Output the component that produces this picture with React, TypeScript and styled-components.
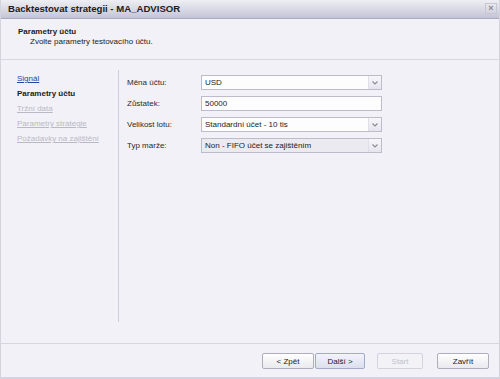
import React from "react";
import styled, { createGlobalStyle } from "styled-components";

const Global = createGlobalStyle`
  html, body { margin: 0; padding: 0; background: #f2f1f7; }
  body { font-family: "Liberation Sans", Arial, sans-serif; }
  * { box-sizing: border-box; }
`;

const Window = styled.div`
  width: 500px;
  height: 379px;
  display: flex;
  flex-direction: column;
  background: #f2f1f7;
  border-left: 1px solid #d4d3de;
  border-right: 1px solid #d4d3de;
  border-bottom: 2px solid #d4d3de;
  font-size: 8px;
  color: #1c1c1c;
`;

const TitleBar = styled.div`
  height: 19px;
  flex: none;
  display: flex;
  align-items: center;
  justify-content: space-between;
  padding: 0 2px 1px 7px;
  background: linear-gradient(#eeeef4, #d8d8e4 55%, #c4c4d6);
  border-bottom: 1px solid #a9a9c2;
`;

const Title = styled.span`
  font-size: 9.6px;
  font-weight: bold;
  color: #202020;
`;

const CloseBtn = styled.div`
  width: 12px;
  height: 11px;
  display: flex;
  align-items: center;
  justify-content: center;
  background: linear-gradient(#e8e8ee, #d2d2de);
  border: 1px solid #c6c6d4;
  color: #888892;
  font-size: 9px;
  font-weight: bold;
  line-height: 1;
`;

const Header = styled.div`
  height: 41px;
  flex: none;
  padding: 8px 0 0 17px;
  border-bottom: 1px solid #d8d7e2;
`;

const HeaderTitle = styled.div`
  font-weight: bold;
  line-height: 10px;
`;

const HeaderSub = styled.div`
  padding-left: 12px;
  line-height: 10px;
`;

const Body = styled.div`
  flex: 1;
  display: flex;
  padding: 10px 0 21px;
`;

const Nav = styled.div`
  width: 118px;
  flex: none;
  padding: 1px 0 0 16px;
  border-right: 1px solid #cfcedb;
  display: flex;
  flex-direction: column;
`;

const NavItem = styled.span<{ $state: "link" | "active" | "disabled" }>`
  line-height: 15px;
  white-space: nowrap;
  font-weight: ${(p) => (p.$state === "active" ? "bold" : "normal")};
  color: ${(p) =>
    p.$state === "link" ? "#2845a6" : p.$state === "disabled" ? "#b9b9c6" : "#1c1c1c"};
  text-decoration: ${(p) => (p.$state === "active" ? "none" : "underline")};
`;

const Form = styled.div`
  padding: 5px 0 0 8px;
  display: grid;
  grid-template-columns: 74px 181px;
  grid-auto-rows: 15px;
  row-gap: 6px;
  align-items: center;
  align-content: start;
`;

const Label = styled.span`
  white-space: nowrap;
  color: #2a2a2a;
`;

const Field = styled.div<{ $disabled?: boolean }>`
  height: 15px;
  display: flex;
  align-items: stretch;
  border: 1px solid #bdbccb;
  background: ${(p) => (p.$disabled ? "#ebeaf1" : "#fdfdfe")};
`;

const FieldText = styled.span`
  flex: 1;
  padding-left: 3px;
  line-height: 13px;
  white-space: nowrap;
  overflow: hidden;
`;

const Arrow = styled.span`
  width: 13px;
  flex: none;
  display: flex;
  align-items: center;
  justify-content: center;
  background: linear-gradient(#f7f7fa, #e6e5ee);
  border-left: 1px solid #e0dfe8;
`;

const Footer = styled.div`
  height: 34px;
  flex: none;
  border-top: 1px solid #d6d5e0;
  display: flex;
  justify-content: flex-end;
  align-items: flex-start;
  padding: 9px 10px 0 0;
`;

const Btn = styled.div<{ $w: number; $ml: number; $kind?: "default" | "disabled" }>`
  width: ${(p) => p.$w}px;
  height: 16px;
  margin-left: ${(p) => p.$ml}px;
  display: flex;
  align-items: center;
  justify-content: center;
  border: 1px solid ${(p) => (p.$kind === "disabled" ? "#d4d4de" : p.$kind === "default" ? "#a4aacb" : "#aeaebc")};
  border-radius: 2px;
  background: ${(p) =>
    p.$kind === "default"
      ? "linear-gradient(#f2f3fb, #dcdfef)"
      : p.$kind === "disabled"
      ? "#f3f3f7"
      : "linear-gradient(#ffffff, #e9e9ef)"};
  color: ${(p) => (p.$kind === "disabled" ? "#c0c0cc" : "#1c1c1c")};
  white-space: nowrap;
`;

const Chevron = () => (
  <svg width="6" height="4" viewBox="0 0 6 4">
    <polyline points="0.5,0.5 3,3 5.5,0.5" fill="none" stroke="#8a8a96" strokeWidth="1.1" />
  </svg>
);

export default function App() {
  return (
    <>
      <Global />
      <Window>
        <TitleBar>
          <Title>Backtestovat strategii - MA_ADVISOR</Title>
          <CloseBtn>×</CloseBtn>
        </TitleBar>
        <Header>
          <HeaderTitle>Parametry účtu</HeaderTitle>
          <HeaderSub>Zvolte parametry testovacího účtu.</HeaderSub>
        </Header>
        <Body>
          <Nav>
            <NavItem $state="link">Signál</NavItem>
            <NavItem $state="active">Parametry účtu</NavItem>
            <NavItem $state="disabled">Tržní data</NavItem>
            <NavItem $state="disabled">Parametry strategie</NavItem>
            <NavItem $state="disabled">Požadavky na zajištění</NavItem>
          </Nav>
          <Form>
            <Label>Měna účtu:</Label>
            <Field>
              <FieldText>USD</FieldText>
              <Arrow><Chevron /></Arrow>
            </Field>
            <Label>Zůstatek:</Label>
            <Field>
              <FieldText>50000</FieldText>
            </Field>
            <Label>Velikost lotu:</Label>
            <Field>
              <FieldText>Standardní účet - 10 tis</FieldText>
              <Arrow><Chevron /></Arrow>
            </Field>
            <Label>Typ marže:</Label>
            <Field $disabled>
              <FieldText>Non - FIFO účet se zajištěním</FieldText>
              <Arrow><Chevron /></Arrow>
            </Field>
          </Form>
        </Body>
        <Footer>
          <Btn $w={52} $ml={0}>&lt; Zpět</Btn>
          <Btn $w={50} $ml={1} $kind="default">Další &gt;</Btn>
          <Btn $w={46} $ml={12} $kind="disabled">Start</Btn>
          <Btn $w={52} $ml={14}>Zavřít</Btn>
        </Footer>
      </Window>
    </>
  );
}
